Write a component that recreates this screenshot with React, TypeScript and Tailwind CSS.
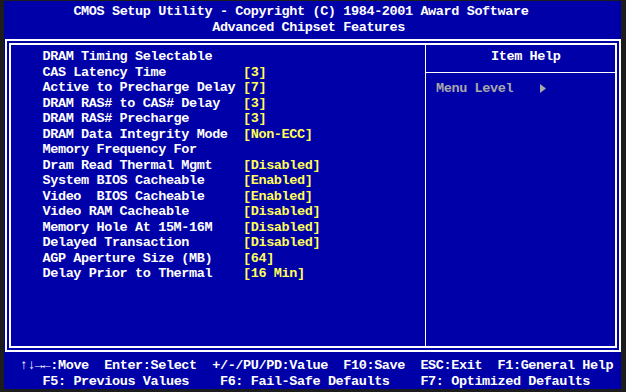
const MONO = "font-['Liberation_Mono','DejaVu_Sans_Mono',monospace]";

const settings: [string, string][] = [
  ["DRAM Timing Selectable", ""],
  ["CAS Latency Time", "[3]"],
  ["Active to Precharge Delay", "[7]"],
  ["DRAM RAS# to CAS# Delay", "[3]"],
  ["DRAM RAS# Precharge", "[3]"],
  ["DRAM Data Integrity Mode", "[Non-ECC]"],
  ["Memory Frequency For", ""],
  ["Dram Read Thermal Mgmt", "[Disabled]"],
  ["System BIOS Cacheable", "[Enabled]"],
  ["Video  BIOS Cacheable", "[Enabled]"],
  ["Video RAM Cacheable", "[Disabled]"],
  ["Memory Hole At 15M-16M", "[Disabled]"],
  ["Delayed Transaction", "[Disabled]"],
  ["AGP Aperture Size (MB)", "[64]"],
  ["Delay Prior to Thermal", "[16 Min]"],
];

function Line({ children, className = "" }: { children: React.ReactNode; className?: string }) {
  return <div className={`h-[15.5px] whitespace-pre ${className}`}>{children}</div>;
}

function SettingRow({ label, value }: { label: string; value: string }) {
  return (
    <div className="flex h-[15.5px] whitespace-pre">
      <span className="w-[200.5px] shrink-0 text-white">{label}</span>
      <span className="text-[#ffff55]">{value}</span>
    </div>
  );
}

export default function App() {
  return (
    <div className={`w-[626px] h-[392px] bg-[#1c1c1c] pt-px pl-[4px] ${MONO} font-bold text-[13.5px] tracking-[-0.39px] leading-[15.5px] text-white`}>
      <div className="w-[617px] h-[388px] bg-[#0000a8] flex flex-col">
        <header className="pt-[3px]">
          <Line className="pl-[69.4px]">CMOS Setup Utility - Copyright (C) 1984-2001 Award Software</Line>
          <Line className="pl-[208.2px]">Advanced Chipset Features</Line>
        </header>

        <div className="mt-[4px] ml-px h-[313px] border-2 border-white p-[2px]">
          <div className="h-full border-2 border-white flex">
            <section className="w-[414px] pt-[4px] pl-[31.5px]">
              {settings.map(([label, value]) => (
                <SettingRow key={label} label={label} value={value} />
              ))}
            </section>
            <div className="w-px bg-white" />
            <aside className="flex-1 pt-[4px]">
              <Line className="pl-[65px]">Item Help</Line>
              <div className="mt-[7px] h-px bg-white" />
              <div className="mt-[8.5px] h-[15.5px] flex items-center pl-[10px] text-[#a8a8a8]">
                <span className="whitespace-pre">Menu Level</span>
                <svg className="ml-[27px]" width="6" height="9" viewBox="0 0 6 9">
                  <polygon points="0,0 6,4.5 0,9" fill="#a8a8a8" />
                </svg>
              </div>
            </aside>
          </div>
        </div>

        <footer className="mt-[6px]">
          <Line>{"  ↑↓→←:Move  Enter:Select  +/-/PU/PD:Value  F10:Save  ESC:Exit  F1:General Help"}</Line>
          <Line>{"     F5: Previous Values    F6: Fail-Safe Defaults    F7: Optimized Defaults"}</Line>
        </footer>
      </div>
    </div>
  );
}
